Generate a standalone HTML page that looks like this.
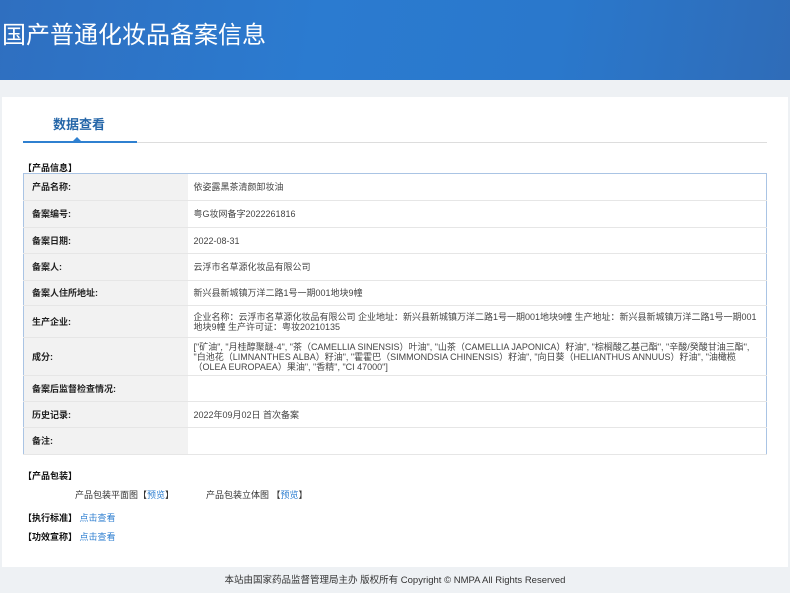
<!DOCTYPE html>
<html><head><meta charset="utf-8"><style>
*{margin:0;padding:0;box-sizing:border-box}
body{width:790px;height:593px;overflow:hidden;background:#eef1f4;font-family:"Liberation Sans","Noto Sans CJK SC",sans-serif;font-size:9px;color:#333;position:relative}
.hdr{position:absolute;left:0;top:0;width:790px;height:80px;background:linear-gradient(100deg,#2f6fc0 0%,#2b7bd0 40%,#2a78cc 70%,#2f6cb8 100%)}
.hdr h1{position:absolute;left:2px;top:15px;font-size:24px;font-weight:normal;color:#fff;font-family:"Noto Sans CJK SC",sans-serif}
.card{position:absolute;left:2px;top:97px;width:786px;height:470px;background:#fff}
.tab{position:absolute;left:51px;top:17px;font-size:13px;font-weight:bold;color:#2566a8}
.line{position:absolute;left:21px;top:45px;width:744px;height:1px;background:#ddd}
.bl{position:absolute;left:21px;top:44px;width:114px;height:2px;background:#2f80d0}
.tri{position:absolute;left:71px;top:40px;width:0;height:0;border-left:4px solid transparent;border-right:4px solid transparent;border-bottom:4px solid #2f80d0}
.sec{position:absolute;font-weight:bold;color:#111}
table{position:absolute;left:21px;top:76px;width:744px;border-collapse:collapse;border:1px solid #aac4e4}
td{border-bottom:1px solid #e6e6e6;vertical-align:middle;line-height:10px}
td.l{width:164px;background:#f2f2f2;font-weight:bold;padding-left:8px;color:#222}
td.v{padding:0 6px;color:#444}
a{color:#2f7fd0;text-decoration:none}
.ft{position:absolute;left:0;top:572px;width:790px;text-align:center;color:#333;font-size:9.5px}
</style></head><body>
<div class="hdr"><h1>国产普通化妆品备案信息</h1></div>
<div class="card">
<div class="tab">数据查看</div>
<div class="line"></div><div class="bl"></div><div class="tri"></div>
<div class="sec" style="left:21px;top:64px">【产品信息】</div>
<table>
<tr style="height:27px"><td class="l">产品名称:</td><td class="v">依姿露黑茶清颜卸妆油</td></tr>
<tr style="height:27px"><td class="l">备案编号:</td><td class="v">粤G妆网备字2022261816</td></tr>
<tr style="height:26px"><td class="l">备案日期:</td><td class="v">2022-08-31</td></tr>
<tr style="height:27px"><td class="l">备案人:</td><td class="v">云浮市名草源化妆品有限公司</td></tr>
<tr style="height:25px"><td class="l">备案人住所地址:</td><td class="v">新兴县新城镇万洋二路1号一期001地块9幢</td></tr>
<tr style="height:32px"><td class="l">生产企业:</td><td class="v">企业名称：云浮市名草源化妆品有限公司 企业地址：新兴县新城镇万洋二路1号一期001地块9幢 生产地址：新兴县新城镇万洋二路1号一期001地块9幢 生产许可证：粤妆20210135</td></tr>
<tr style="height:38px"><td class="l">成分:</td><td class="v">["矿油", "月桂醇聚醚-4", "茶（CAMELLIA SINENSIS）叶油", "山茶（CAMELLIA JAPONICA）籽油", "棕榈酸乙基己酯", "辛酸/癸酸甘油三酯", "白池花（LIMNANTHES ALBA）籽油", "霍霍巴（SIMMONDSIA CHINENSIS）籽油", "向日葵（HELIANTHUS ANNUUS）籽油", "油橄榄（OLEA EUROPAEA）果油", "香精", "CI 47000"]</td></tr>
<tr style="height:26px"><td class="l">备案后监督检查情况:</td><td class="v"></td></tr>
<tr style="height:26px"><td class="l">历史记录:</td><td class="v">2022年09月02日 首次备案</td></tr>
<tr style="height:27px"><td class="l">备注:</td><td class="v"></td></tr>
</table>
<div class="sec" style="left:21px;top:372px">【产品包装】</div>
<div style="position:absolute;left:73px;top:391px">产品包装平面图【<a>预览</a>】</div>
<div style="position:absolute;left:204px;top:391px">产品包装立体图 【<a>预览</a>】</div>
<div style="position:absolute;left:21px;top:414px"><b style="color:#111">【执行标准】</b> <a>点击查看</a></div>
<div style="position:absolute;left:21px;top:433px"><b style="color:#111">【功效宣称】</b> <a>点击查看</a></div>
</div>
<div class="ft">本站由国家药品监督管理局主办 版权所有 Copyright © NMPA All Rights Reserved</div>
</body></html>
